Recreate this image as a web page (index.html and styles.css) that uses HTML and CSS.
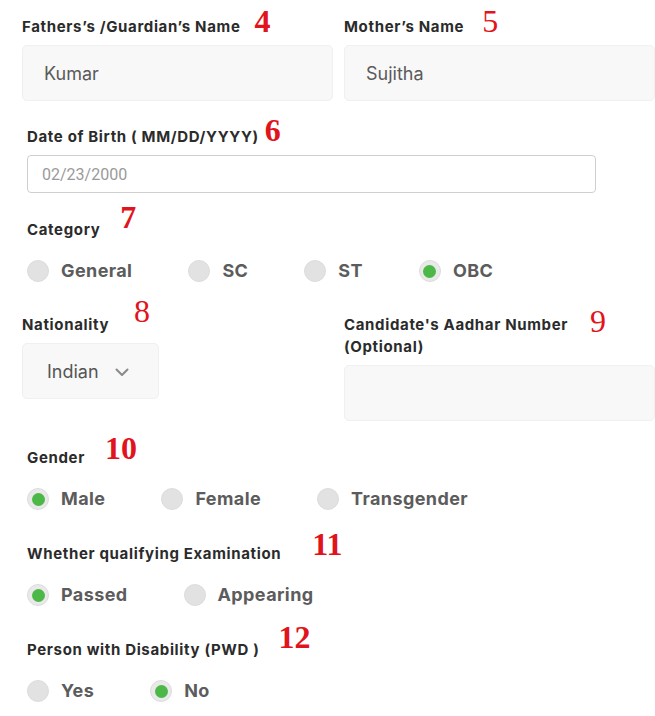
FILE: index.html
```html
<!DOCTYPE html>
<html lang="en">
<head>
<meta charset="utf-8">
<title>Application form</title>
<link rel="stylesheet" href="styles.css">
</head>
<body>
<form class="form">
  <div class="pair row-names">
    <div class="field">
      <div class="label">Fathers’s /Guardian’s Name<span class="num n4">4</span></div>
      <div class="box">Kumar</div>
    </div>
    <div class="field">
      <div class="label">Mother’s Name<span class="num n5">5</span></div>
      <div class="box">Sujitha</div>
    </div>
  </div>

  <div class="section sec-dob">
    <div class="label">Date of Birth ( MM/DD/YYYY)<span class="num n6">6</span></div>
    <div class="date">02/23/2000</div>
  </div>

  <div class="section sec-cat">
    <div class="label">Category<span class="num n7">7</span></div>
    <div class="radios">
      <div class="radio"><span class="dot"></span><span class="rtext">General</span></div>
      <div class="radio"><span class="dot"></span><span class="rtext">SC</span></div>
      <div class="radio"><span class="dot"></span><span class="rtext">ST</span></div>
      <div class="radio"><span class="dot on"></span><span class="rtext">OBC</span></div>
    </div>
  </div>

  <div class="pair row-nat">
    <div class="field">
      <div class="label tall">Nationality<span class="num n8">8</span></div>
      <div class="select">Indian
        <svg class="chev" width="14" height="9" viewBox="0 0 14 9"><polyline points="1.5,1.5 7,7 12.5,1.5" fill="none" stroke="#8a8a8a" stroke-width="2" stroke-linecap="round" stroke-linejoin="round"/></svg>
      </div>
    </div>
    <div class="field">
      <div class="label tall">Candidate's Aadhar Number<span class="num n9">9</span><br>(Optional)</div>
      <div class="box aadhar"></div>
    </div>
  </div>

  <div class="section sec-gender">
    <div class="label">Gender<span class="num n10">10</span></div>
    <div class="radios">
      <div class="radio"><span class="dot on"></span><span class="rtext">Male</span></div>
      <div class="radio"><span class="dot"></span><span class="rtext">Female</span></div>
      <div class="radio"><span class="dot"></span><span class="rtext">Transgender</span></div>
    </div>
  </div>

  <div class="section sec-exam">
    <div class="label">Whether qualifying Examination<span class="num n11">11</span></div>
    <div class="radios">
      <div class="radio"><span class="dot on"></span><span class="rtext">Passed</span></div>
      <div class="radio"><span class="dot"></span><span class="rtext">Appearing</span></div>
    </div>
  </div>

  <div class="section sec-pwd">
    <div class="label">Person with Disability (PWD )<span class="num n12">12</span></div>
    <div class="radios">
      <div class="radio"><span class="dot"></span><span class="rtext">Yes</span></div>
      <div class="radio"><span class="dot on"></span><span class="rtext">No</span></div>
    </div>
  </div>
</form>
</body>
</html>
```

FILE: styles.css
```css
html, body {
  margin: 0;
  padding: 0;
  background: #ffffff;
  overflow: hidden;
}
body {
  font-family: "Inter", "Liberation Sans", sans-serif;
  color: #2d2d2d;
}
.form {
  display: flex;
  flex-direction: column;
  padding-top: 18px;
}
.pair {
  display: grid;
  grid-template-columns: 311px 311px;
  column-gap: 11px;
  padding-left: 22px;
}
.label {
  font-size: 15px;
  font-weight: 700;
  line-height: 18px;
  color: #2b2b2b;
  letter-spacing: 0.65px;
  white-space: nowrap;
}
.label.tall {
  line-height: 22px;
}
.num {
  position: relative;
  font-family: "Liberation Serif", "Times New Roman", serif;
  font-weight: 700;
  font-size: 32px;
  line-height: 0;
  letter-spacing: 0;
  color: #e1131c;
}
.n4 { margin-left: 14px; }
.n5 { margin-left: 18px; font-weight: 400; }
.n6 { margin-left: 6px; top: -1px; }
.n7 { margin-left: 20px; top: -7px; }
.n8 { margin-left: 25px; top: -8px; font-weight: 400; }
.n9 { margin-left: 22px; top: 2px; font-weight: 400; }
.n10 { margin-left: 20px; top: -4px; }
.n11 { margin-left: 31px; top: -4px; }
.n12 { margin-left: 19px; top: -7px; }

.box {
  margin-top: 9px;
  height: 56px;
  box-sizing: border-box;
  background: #f8f8f8;
  border: 1px solid #f0f0f0;
  border-radius: 5px;
  padding-left: 21px;
  display: flex;
  align-items: center;
  font-size: 18px;
  color: #5a5a5a;
}
.box.aadhar {
  margin-top: 7px;
}
.select {
  margin-top: 7px;
  width: 137px;
  height: 56px;
  box-sizing: border-box;
  background: #f8f8f8;
  border: 1px solid #f0f0f0;
  border-radius: 5px;
  padding-left: 24px;
  display: flex;
  align-items: center;
  gap: 16px;
  font-size: 18px;
  color: #555555;
}
.chev {
  display: block;
  margin-top: 2px;
}

.section {
  padding-left: 27px;
}
.sec-dob { margin-top: 27px; }
.sec-cat { margin-top: 28px; }
.row-nat { margin-top: 32px; }
.sec-gender { margin-top: 28px; }
.sec-exam { margin-top: 35px; }
.sec-pwd { margin-top: 35px; }

.date {
  margin-top: 9px;
  width: 569px;
  height: 38px;
  box-sizing: border-box;
  border: 1px solid #cfcfcf;
  border-radius: 4px;
  background: #ffffff;
  padding-left: 14px;
  display: flex;
  align-items: center;
  font-family: "Roboto", "Liberation Sans", sans-serif;
  font-size: 16px;
  color: #9a9a9a;
}

.radios {
  display: flex;
  gap: 56px;
  margin-top: 21px;
}
.radio {
  display: flex;
  align-items: center;
  gap: 12px;
  height: 22px;
}
.dot {
  width: 22px;
  height: 22px;
  box-sizing: border-box;
  border-radius: 50%;
  background: #e2e2e2;
  border: 1px solid #dcdcdc;
  display: flex;
  align-items: center;
  justify-content: center;
}
.dot.on {
  background: #e9e9e9;
}
.dot.on::after {
  content: "";
  width: 13px;
  height: 13px;
  border-radius: 50%;
  background: #4cb848;
}
.rtext {
  font-size: 18px;
  font-weight: 700;
  line-height: 22px;
  letter-spacing: 0.4px;
  color: #5c5c5c;
}
```
